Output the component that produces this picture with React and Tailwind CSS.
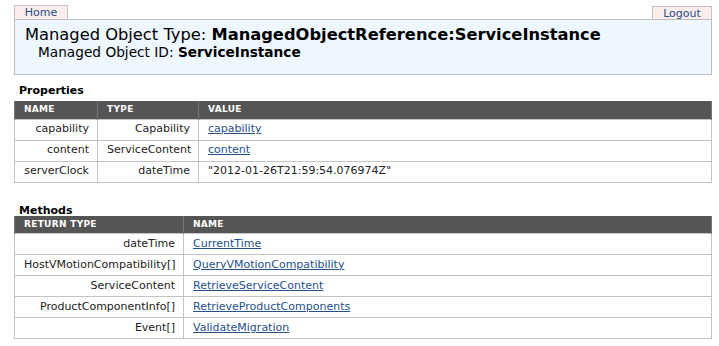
import React from 'react';

const properties = [
  { name: 'capability', type: 'Capability', value: 'capability', link: true },
  { name: 'content', type: 'ServiceContent', value: 'content', link: true },
  { name: 'serverClock', type: 'dateTime', value: '"2012-01-26T21:59:54.076974Z"', link: false },
];

const methods = [
  { ret: 'dateTime', name: 'CurrentTime' },
  { ret: 'HostVMotionCompatibility[]', name: 'QueryVMotionCompatibility' },
  { ret: 'ServiceContent', name: 'RetrieveServiceContent' },
  { ret: 'ProductComponentInfo[]', name: 'RetrieveProductComponents' },
  { ret: 'Event[]', name: 'ValidateMigration' },
];

const th = 'h-[18px] px-[9px] text-left text-[9px] font-bold uppercase tracking-[0.3px] text-white border-x border-[#777]';
const td = 'h-[21px] pl-[9px] pr-[8px] border border-[#c4c4c4] whitespace-nowrap';
const linkCls = 'text-[#24508a] underline';

export default function App() {
  return (
    <div className="w-[719px] h-[346px] bg-white pl-[14px] pr-[7px] text-[11px] text-[#222] font-['Verdana','DejaVu_Sans',sans-serif]">
      <div className="flex justify-between items-end h-[19px]">
        <a className="h-[14px] w-[54px] flex items-center justify-center bg-[#fdecec] border border-b-0 border-[#c9c0c0] text-[#24508a] text-[11px] leading-none">Home</a>
        <a className="h-[13px] w-[60px] flex items-center justify-center bg-[#fdecec] border border-b-0 border-[#c9c0c0] text-[#24508a] text-[11px] leading-none">Logout</a>
      </div>
      <div className="h-[56px] bg-[#eef6ff] border border-[#bdbdbd] pl-[10px] pt-[5px]">
        <div className="text-[16.3px] leading-[19px] text-black">
          Managed Object Type: <span className="font-bold">ManagedObjectReference:ServiceInstance</span>
        </div>
        <div className="pl-[13px] text-[13.7px] leading-[16px] text-black">
          Managed Object ID: <span className="font-bold">ServiceInstance</span>
        </div>
      </div>

      <div className="pl-[5px] pt-[8px] h-[26px] font-bold text-[11px] text-black">Properties</div>
      <table className="w-full table-fixed border-collapse">
        <thead>
          <tr className="bg-[#555555]">
            <th className={`${th} w-[83px]`}>Name</th>
            <th className={`${th} w-[101px]`}>Type</th>
            <th className={th}>Value</th>
          </tr>
        </thead>
        <tbody>
          {properties.map((p) => (
            <tr key={p.name}>
              <td className={`${td} text-right`}>{p.name}</td>
              <td className={`${td} text-right`}>{p.type}</td>
              <td className={td}>
                {p.link ? <a className={linkCls}>{p.value}</a> : p.value}
              </td>
            </tr>
          ))}
        </tbody>
      </table>

      <div className="pl-[5px] pt-[20px] h-[33px] font-bold text-[11px] text-black">Methods</div>
      <table className="w-full table-fixed border-collapse">
        <thead>
          <tr className="bg-[#555555]">
            <th className={`${th} w-[169px]`}>Return Type</th>
            <th className={th}>Name</th>
          </tr>
        </thead>
        <tbody>
          {methods.map((m) => (
            <tr key={m.name}>
              <td className={`${td} h-[20.7px] text-right`}>{m.ret}</td>
              <td className={`${td} h-[20.7px]`}>
                <a className={linkCls}>{m.name}</a>
              </td>
            </tr>
          ))}
        </tbody>
      </table>
    </div>
  );
}
